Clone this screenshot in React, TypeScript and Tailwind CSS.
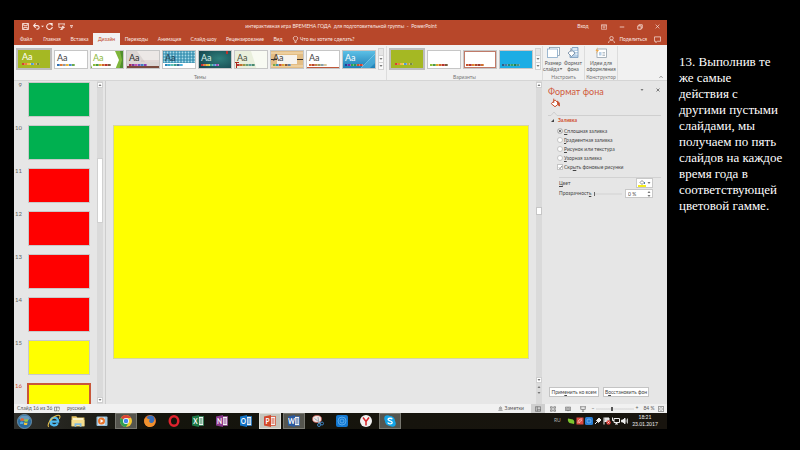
import { useState, type ReactNode } from "react";
import clsx from "clsx";

type Theme = {
  name: string;
  ink: string;
  dots: string[];
  art: ReactNode;
};

const WARM = ["#d8432e", "#e8862d", "#f0c63a", "#4f9bd0", "#c9a52e", "#7b8f3c"];
const MIXED = ["#2f6fb5", "#e07b35", "#8f9aa3", "#f0b93a", "#4a8fd0", "#6bab4a"];
const GREENISH = ["#8cbf3a", "#4c9a45", "#e0a52e", "#d1602e", "#b8342e", "#7a5a3a"];
const VIOLET = ["#a8275a", "#7a3a9a", "#c04fb0", "#6a58c0", "#3f7fc0", "#8a3fae"];
const AQUA = ["#2a86b8", "#39a8c9", "#5ac0b0", "#3f9a8a", "#2f6f9a", "#4fb0d8"];

const themes: Theme[] = [
  { name: "Галерея", ink: "text-white", dots: WARM, art: <rect width="34" height="19" fill="#a5b823" /> },
  { name: "Office", ink: "text-[#444444]", dots: MIXED, art: <rect width="34" height="19" fill="#fff" /> },
  {
    name: "Грань",
    ink: "text-[#8cb83c]",
    dots: GREENISH,
    art: (
      <>
        <rect width="34" height="19" fill="#fff" />
        <path d="M24 0H34V19H24L28 9Z" fill="#7fb63c" />
        <path d="M29 0H34V19H28L31 9Z" fill="#4f8f2e" />
        <path d="M0 14L2 19H0Z" fill="#7fb63c" />
      </>
    ),
  },
  {
    name: "Студия",
    ink: "text-[#2b2b2b]",
    dots: VIOLET,
    art: (
      <>
        <rect width="34" height="19" fill="#dcd6d4" />
        <path d="M10 0H34V11H18Z" fill="#ece8e6" />
        <path d="M14 10H32" stroke="#c7a9a4" strokeWidth="0.5" />
        <rect y="15" width="34" height="3" fill="#7a4a3c" />
      </>
    ),
  },
  {
    name: "Интеграл",
    ink: "text-[#1f3f50]",
    dots: AQUA,
    art: (
      <>
        <defs>
          <pattern id="lattice" width="3" height="3" patternUnits="userSpaceOnUse">
            <rect width="3" height="3" fill="#3f94b4" />
            <circle cx="1.5" cy="1.5" r="0.9" fill="#a9dcea" />
          </pattern>
        </defs>
        <rect width="34" height="19" fill="#fff" />
        <rect width="34" height="12" fill="url(#lattice)" />
      </>
    ),
  },
  {
    name: "Ион",
    ink: "text-[#d9efe9]",
    dots: ["#c8322e", "#e0862d", "#d8c83a", "#3fa88a", "#4a8fd0", "#9a4fb0"],
    art: (
      <>
        <defs>
          <radialGradient id="ion" cx="0.6" cy="0.4" r="0.8">
            <stop offset="0" stopColor="#2f7f7c" />
            <stop offset="1" stopColor="#123f48" />
          </radialGradient>
        </defs>
        <rect width="34" height="19" fill="url(#ion)" />
        <rect x="27" width="2" height="3" fill="#b8322e" />
      </>
    ),
  },
  {
    name: "Легкий дым",
    ink: "text-[#4a4f3c]",
    dots: ["#b8322e", "#c0702e", "#8f9a4a", "#6ba07a", "#5a9a9a", "#4a8a6a"],
    art: (
      <>
        <rect width="34" height="19" fill="#e9efdc" />
        <path d="M16 0H34V19H22Z" fill="#f8faf2" />
        <path d="M0 11H4V12H2V17H1V12H0Z" fill="#a8281e" />
      </>
    ),
  },
  {
    name: "Натуральные материалы",
    ink: "text-[#3c3c3c]",
    dots: ["#7fa83c", "#3f8fa8", "#c84f2e", "#e0a52e", "#8a5a3a", "#5a7f9a"],
    art: (
      <>
        <rect width="34" height="19" fill="#e3bd84" />
        <path d="M0 2H34M0 15H34" stroke="#edcf9f" strokeWidth="2" />
        <path d="M0 8.500H34" stroke="#3a2f28" strokeWidth="1.200" />
        <rect x="6" y="4" width="20" height="9" fill="#f6f3ee" />
      </>
    ),
  },
  {
    name: "Ретро",
    ink: "text-[#444444]",
    dots: ["#d8632e", "#b8442e", "#c08a4a", "#9a9a6a", "#8aa0a8", "#d8c8a0"],
    art: (
      <>
        <rect width="34" height="19" fill="#fff" />
        <rect y="16" width="34" height="1" fill="#c0583a" />
      </>
    ),
  },
  {
    name: "Сектор",
    ink: "text-white",
    dots: ["#1f3f9a", "#7a2f9a", "#2fa84a", "#2f8f5a", "#c84f3a", "#d8432e"],
    art: (
      <>
        <defs>
          <linearGradient id="sector" x2="0" y2="1">
            <stop offset="0" stopColor="#5cc0e6" />
            <stop offset="1" stopColor="#1878b0" />
          </linearGradient>
        </defs>
        <rect width="34" height="19" fill="url(#sector)" />
        <path d="M18 17L32 3V12L27 17Z" fill="#4fb0dc" opacity="0.7" />
        <path d="M18 17L32 3" stroke="#9fdcf4" strokeWidth="0.5" />
      </>
    ),
  },
];

const variants: Theme[] = [
  { name: "Вариант 1", ink: "", dots: WARM, art: <rect width="34" height="19" fill="#a5b823" /> },
  { name: "Вариант 2", ink: "", dots: GREENISH, art: <rect width="34" height="19" fill="#fff" /> },
  {
    name: "Вариант 3",
    ink: "",
    dots: ["#c8542e", "#b8342e", "#e0862d", "#b04a2e", "#a03c2e", "#d0702e"],
    art: <rect x="0.5" y="0.5" width="31" height="16" fill="#fff" stroke="#c07a68" />,
  },
  {
    name: "Вариант 4",
    ink: "",
    dots: ["#2a5f8a", "#3f7fa8", "#1f8a7a", "#2fa06a", "#1f7f5a", "#3f8f8a"],
    art: <rect width="34" height="19" fill="#1cade4" />,
  },
];

const tabs = [
  { label: "Файл", width: "w-6" },
  { label: "Главная", width: "w-7" },
  { label: "Вставка", width: "w-[27px]" },
  { label: "Дизайн", width: "w-[27px]" },
  { label: "Переходы", width: "w-[33px]" },
  { label: "Анимация", width: "w-[33px]" },
  { label: "Слайд-шоу", width: "w-[35px]" },
  { label: "Рецензирование", width: "w-12" },
  { label: "Вид", width: "w-[18px]" },
];

const slides = [
  { number: 9, color: "bg-[#00b050]" },
  { number: 10, color: "bg-[#00b050]" },
  { number: 11, color: "bg-[#ff0000]" },
  { number: 12, color: "bg-[#ff0000]" },
  { number: 13, color: "bg-[#ff0000]" },
  { number: 14, color: "bg-[#ff0000]" },
  { number: 15, color: "bg-[#ffff00]" },
  { number: 16, color: "bg-[#ffff00]" },
];

function Icon({ size = "size-2", children }: { size?: string; children: ReactNode }) {
  return (
    <svg viewBox="0 0 16 16" fill="none" stroke="currentColor" strokeWidth="1.6" className={clsx("shrink-0", size)} aria-hidden="true">
      {children}
    </svg>
  );
}

function Caret({ up = false }: { up?: boolean }) {
  return (
    <svg viewBox="0 0 4 4" className="size-1 shrink-0" fill="#777" aria-hidden="true">
      <path d={up ? "M0.500 3L2 1L3.500 3Z" : "M0.500 1H3.500L2 3Z"} />
    </svg>
  );
}

function ThemeTile({ theme, selected = false, sample = true }: { theme: Theme; selected?: boolean; sample?: boolean }) {
  return (
    <button
      type="button"
      aria-label={theme.name}
      aria-pressed={selected}
      className={clsx(
        "relative flex flex-col items-start justify-end overflow-hidden",
        selected ? "h-[22px] w-9 border-2 border-[#bdbdbd] pb-[3px] pl-1" : "h-[19px] w-[34px] border border-[#c6c6c6] pb-0.5 pl-0.5"
      )}
    >
      <svg viewBox="0 0 32 17" preserveAspectRatio="none" className="absolute inset-0 size-full" aria-hidden="true">
        {theme.art}
      </svg>
      {sample && <span className={clsx("relative text-[9px] leading-[9px]", theme.ink)}>Aa</span>}
      <span className={clsx("relative flex h-0.5", sample && "mt-0.5")}>
        {theme.dots.map((dot, index) => (
          <span key={index} className="h-0.5 w-[3px] border-r border-white/30" style={{ backgroundColor: dot }} />
        ))}
      </span>
    </button>
  );
}

function GalleryScroller() {
  return (
    <div className="flex h-[22px] w-1.5 flex-col border border-[#d2d2d2] bg-[#fafafa]">
      <button type="button" aria-label="Предыдущая строка" className="flex flex-1 items-center justify-center bg-[#e6e6e6]" />
      <button type="button" aria-label="Следующая строка" className="flex flex-1 items-center justify-center border-y border-[#d2d2d2]">
        <Caret />
      </button>
      <button type="button" aria-label="Дополнительно" className="flex flex-1 items-center justify-center">
        <Caret />
      </button>
    </div>
  );
}

function RibbonGroup({ label, className, children }: { label: string; className: string; children: ReactNode }) {
  return (
    <section className={clsx("flex flex-col justify-between border-r border-[#dcdcdc]", className)}>
      <div className="flex h-[26px] items-center">{children}</div>
      <h2 className="text-center text-[5px] leading-[6px] whitespace-nowrap text-[#777]">{label}</h2>
    </section>
  );
}

function RibbonCommand({ lines, caret = false, children }: { lines: [string, string]; caret?: boolean; children: ReactNode }) {
  return (
    <button type="button" className="flex w-5 flex-col items-center text-[5px] leading-[6px] whitespace-nowrap text-[#555]">
      {children}
      <span className="mt-0.5">{lines[0]}</span>
      <span className="flex items-center">
        {lines[1]}
        {caret && <Caret />}
      </span>
    </button>
  );
}

function TitleBar() {
  return (
    <header className="grid h-[13px] grid-cols-[1fr_auto_1fr] items-center pr-1.5 pl-[7px] text-[#fbe9e4]">
      <div className="flex items-center">
        <button type="button" aria-label="Сохранить" className="flex w-3 pl-px">
          <Icon size="size-[7px]">
            <path d="M1 1H15V15H1Z" strokeWidth="2" />
            <path d="M4 1V6H12V1M4 15V10H12V15" strokeWidth="2" />
          </Icon>
        </button>
        <button type="button" aria-label="Отменить" className="flex w-[13px]">
          <Icon size="size-[7px]">
            <path d="M2 6H10A4 4 0 0 1 10 14H8M6 1L1.500 6L6 11" strokeWidth="2.400" />
          </Icon>
          <svg viewBox="0 0 4 4" className="mt-0.5 ml-px size-[3px]" fill="currentColor" aria-hidden="true">
            <path d="M0 1H4L2 3Z" />
          </svg>
        </button>
        <button type="button" aria-label="Повторить" className="flex w-3">
          <Icon size="size-[7px]">
            <path d="M13 4A6.500 6.500 0 1 0 14.500 9M8 1H14V7" strokeWidth="2.400" />
          </Icon>
        </button>
        <button type="button" aria-label="Показ с начала" className="flex w-3">
          <Icon size="size-[7px]">
            <path d="M0 2H16M2 2V10H8M14 2V6M8 10V15M5 15H11" strokeWidth="1.800" />
            <path d="M10 7L15 10L10 13Z" fill="currentColor" />
          </Icon>
        </button>
        <button type="button" aria-label="Настройка панели" className="flex w-1">
          <svg viewBox="0 0 4 4" className="size-[3px]" fill="currentColor" aria-hidden="true">
            <path d="M0 0H4V1H0ZM0 2H4L2 4Z" />
          </svg>
        </button>
      </div>
      <h1 className="text-[5px] leading-none whitespace-pre">
        интерактивная игра ВРЕМЕНА ГОДА  для подготовительной группы  -  PowerPoint
      </h1>
      <div className="flex items-center justify-end">
        <button type="button" className="w-6 text-[5px] leading-none">
          Вход
        </button>
        <button type="button" aria-label="Параметры ленты" className="flex w-[18px] justify-center">
          <Icon size="size-1.5">
            <path d="M1 2H15V14H1ZM1 5H15M8 12V7M5 10L8 7L11 10" />
          </Icon>
        </button>
        <button type="button" aria-label="Свернуть" className="flex w-[18px] justify-center">
          <Icon size="size-1.5">
            <path d="M2 8H14" strokeWidth="2" />
          </Icon>
        </button>
        <button type="button" aria-label="Восстановить" className="flex w-[18px] justify-center">
          <Icon size="size-1.5">
            <path d="M2 5H11V14H2ZM5 5V2H14V11H11" strokeWidth="2" />
          </Icon>
        </button>
        <button type="button" aria-label="Закрыть" className="flex w-3 justify-end pr-px">
          <Icon size="size-[5px]">
            <path d="M2 2L14 14M14 2L2 14" strokeWidth="2" />
          </Icon>
        </button>
      </div>
    </header>
  );
}

function TabBar({ active, onSelect }: { active: string; onSelect: (label: string) => void }) {
  return (
    <nav className="flex h-3 items-stretch text-[5px] leading-none text-[#fbe9e4]">
      {tabs.map((tab) => (
        <button
          key={tab.label}
          type="button"
          onClick={() => onSelect(tab.label)}
          className={clsx(
            "shrink-0 whitespace-nowrap",
            tab.width,
            tab.label === active && "bg-[#f1f1f1] text-[#c0482a]"
          )}
        >
          {tab.label}
        </button>
      ))}
      <button type="button" className="ml-[5px] flex items-center gap-px whitespace-nowrap">
        <Icon size="size-[7px]">
          <path d="M6 12V10A5 5 0 1 1 10 10V12ZM6 15H10" />
        </Icon>
        Что вы хотите сделать?
      </button>
      <button type="button" className="ml-auto flex items-center gap-1">
        <Icon size="size-[7px]">
          <circle cx="8" cy="5" r="4" />
          <path d="M1 16C2 11 5 9.500 8 9.500S14 11 15 16" />
        </Icon>
        Поделиться
      </button>
      <button type="button" aria-label="Примечания" className="mr-1.5 ml-[7px] flex items-center">
        <Icon size="size-[7px]">
          <path d="M1 2H15V12H8L4 15V12H1Z" />
        </Icon>
      </button>
    </nav>
  );
}

function Ribbon() {
  return (
    <div className="flex h-9 items-stretch border-b border-[#d5d5d5] bg-[#f1f1f1] pt-px">
      <RibbonGroup label="Темы" className="w-[373px] shrink-0">
        <div className="flex items-center gap-0.5 pl-0.5">
          {themes.map((theme, index) => (
            <ThemeTile key={theme.name} theme={theme} selected={index === 0} />
          ))}
          <GalleryScroller />
        </div>
      </RibbonGroup>
      <RibbonGroup label="Варианты" className="w-[156px] shrink-0">
        <div className="flex items-center gap-0.5 pl-0.5">
          {variants.map((variant, index) => (
            <ThemeTile key={variant.name} theme={variant} selected={index === 0} sample={false} />
          ))}
          <GalleryScroller />
        </div>
      </RibbonGroup>
      <RibbonGroup label="Настроить" className="w-[42px] shrink-0">
        <RibbonCommand lines={["Размер", "слайда"]} caret>
          <svg viewBox="0 0 26 22" className="h-[11px] w-[13px]" aria-hidden="true">
            <rect x="5" y="1" width="20" height="16" fill="#fff" stroke="#7f95a8" strokeWidth="1.500" />
            <rect x="1" y="4" width="20" height="17" fill="#fff" stroke="#7fa3c4" strokeWidth="1.500" />
          </svg>
        </RibbonCommand>
        <RibbonCommand lines={["Формат", "фона"]}>
          <svg viewBox="0 0 24 22" className="h-[11px] w-3" aria-hidden="true">
            <path d="M10 1H22V21H6V12" fill="#b7cfe6" stroke="#6f94b8" strokeWidth="1.500" />
            <path d="M12 4H20M16 9H21M17 14H21" stroke="#fff" strokeWidth="2" />
            <path d="M2 12L9 6L16 12L9 19Z" fill="#fff" stroke="#667f99" strokeWidth="1.500" />
            <path d="M8 2V10" stroke="#667f99" strokeWidth="1.500" />
          </svg>
        </RibbonCommand>
      </RibbonGroup>
      <RibbonGroup label="Конструктор" className="w-[33px] shrink-0 items-center">
        <RibbonCommand lines={["Идеи для", "оформления"]}>
          <svg viewBox="0 0 24 22" className="h-[11px] w-3" aria-hidden="true">
            <rect x="4" y="4" width="19" height="17" fill="#fff" stroke="#8d9aa6" strokeWidth="1.500" />
            <path d="M8 10H13V17H8Z" fill="#b7cfe6" />
            <path d="M15 11H20M15 14H20M15 17H20" stroke="#8d9aa6" strokeWidth="1.200" />
            <path d="M6 0L4 6H8L2 14L4 8H1Z" fill="#f0a94a" />
          </svg>
        </RibbonCommand>
      </RibbonGroup>
      <button type="button" aria-label="Свернуть ленту" className="mt-auto mr-1 mb-px ml-auto text-[#666]">
        <Icon size="size-1">
          <path d="M2 11L8 5L14 11" strokeWidth="3" />
        </Icon>
      </button>
    </div>
  );
}

function SlideList({ current, onSelect }: { current: number; onSelect: (number: number) => void }) {
  return (
    <ol className="flex h-full w-20 flex-col gap-[9px] overflow-hidden pt-px">
      {slides.map((slide) => (
        <li key={slide.number} className="flex h-[34px] shrink-0 items-start">
          <button type="button" onClick={() => onSelect(slide.number)} className="flex items-start" aria-label={`Слайд ${slide.number}`}>
            <span
              className={clsx(
                "w-[13px] pr-[5px] text-right text-[6px] leading-[6px]",
                slide.number === current ? "text-[#d0502e]" : "text-[#666]"
              )}
            >
              {slide.number}
            </span>
            <span
              className={clsx(
                "h-[35px]",
                slide.color,
                slide.number === current ? "w-16 border-2 border-[#c8573a]" : "ml-px w-[62px] border border-[#c9c9c9]"
              )}
            />
          </button>
        </li>
      ))}
    </ol>
  );
}

function ArrowButton({ label, up = false }: { label: string; up?: boolean }) {
  return (
    <button type="button" aria-label={label} className="flex size-1.5 shrink-0 items-center justify-center border border-[#cfcfcf] bg-white">
      <Caret up={up} />
    </button>
  );
}

function FormatPane() {
  const [fill, setFill] = useState("Сплошная заливка");
  const [hidden, setHidden] = useState(true);
  const [opacity, setOpacity] = useState(0);
  const fills = ["Сплошная заливка", "Градиентная заливка", "Рисунок или текстура", "Узорная заливка"];

  return (
    <aside className="flex w-[125px] shrink-0 flex-col px-[6px] pt-[5px] pb-[7px] text-[5px] leading-none text-[#444]">
      <div className="flex items-center">
        <h2 className="flex-1 text-[9px] leading-3 whitespace-nowrap text-[#d0593a]">Формат фона</h2>
        <button type="button" aria-label="Параметры области задач" className="mb-1">
          <Caret />
        </button>
        <button type="button" aria-label="Закрыть область" className="mr-px mb-1 ml-3 text-[#555]">
          <Icon size="size-1">
            <path d="M2 2L14 14M14 2L2 14" strokeWidth="3" />
          </Icon>
        </button>
      </div>
      <button type="button" aria-label="Заливка" className="ml-0.5 w-fit text-[#c8502e]">
        <Icon size="size-2.5">
          <path d="M2 9L8 3L14 9L8 14Z" fill="#fff" />
          <path d="M6 1V8" />
          <path d="M12 5C15 7 15.500 9 15 13L12 9Z" fill="currentColor" />
        </Icon>
      </button>
      <svg viewBox="0 0 113 5" preserveAspectRatio="xMinYMid slice" className="mt-[3px] h-[5px] w-full" fill="none" stroke="#cfcfcf" aria-hidden="true">
        <path d="M0 4.500H3L6 1L9 4.500H113" />
      </svg>
      <button type="button" className="mt-0.5 flex items-center gap-1 pl-[3px] font-bold text-[#d0502e]">
        <svg viewBox="0 0 4 4" className="size-[3px]" fill="#444" aria-hidden="true">
          <path d="M4 0V4H0Z" />
        </svg>
        Заливка
      </button>
      <fieldset className="mt-[5px] flex flex-col gap-[3px] pl-[9px]">
        {fills.map((name) => (
          <label key={name} className="flex h-1.5 items-center gap-px whitespace-nowrap">
            <input
              type="radio"
              name="fill"
              checked={fill === name}
              onChange={() => setFill(name)}
              className="size-1.5 appearance-none rounded-full border border-[#c4c4c4] bg-white checked:bg-[#444] checked:shadow-[inset_0_0_0_1px_#fff]"
            />
            <span>
              <u>{name[0]}</u>
              {name.slice(1)}
            </span>
          </label>
        ))}
        <label className="flex h-1.5 items-center gap-px whitespace-nowrap">
          <span className="grid size-1.5 place-items-center">
            <input
              type="checkbox"
              checked={hidden}
              onChange={() => setHidden(!hidden)}
              className="col-start-1 row-start-1 size-1.5 appearance-none border border-[#c4c4c4] bg-white"
            />
            {hidden && (
              <svg viewBox="0 0 5 5" className="pointer-events-none col-start-1 row-start-1 size-[5px]" fill="none" stroke="#444" strokeWidth="0.600" aria-hidden="true">
                <path d="M1 2.500L2 3.700L4 1" />
              </svg>
            )}
          </span>
          <span>
            Скр<u>ы</u>ть фоновые рисунки
          </span>
        </label>
      </fieldset>
      <div className="mt-[7px] ml-[11px] flex items-center justify-between border-t border-[#d2d2d2] pr-2">
        <span>
          <u>Ц</u>вет
        </span>
        <button type="button" aria-label="Цвет" className="flex h-2.5 w-[17px] items-center justify-center gap-px border border-[#c8c8c8] bg-white">
          <svg viewBox="0 0 16 16" className="size-2" aria-hidden="true">
            <path d="M4 7L8 3L12 7L8 11Z" fill="#fff" stroke="#666" strokeWidth="1.500" />
            <path d="M13 6V10" stroke="#4a7fb0" strokeWidth="2" />
            <rect x="0" y="12" width="16" height="4" fill="#f5ec1e" />
          </svg>
          <Caret />
        </button>
      </div>
      <div className="mt-px ml-[11px] flex items-center pr-2">
        <label htmlFor="transparency" className="w-[35px] whitespace-nowrap">
          Прозрачност<u>ь</u>
        </label>
        <input
          id="transparency"
          type="range"
          min="0"
          max="100"
          value={opacity}
          onChange={(event) => setOpacity(Number(event.target.value))}
          className="h-1.5 w-7 appearance-none bg-linear-to-b from-transparent from-40% via-[#aaa] via-50% to-transparent to-60% [&::-webkit-slider-thumb]:h-1 [&::-webkit-slider-thumb]:w-px [&::-webkit-slider-thumb]:appearance-none [&::-webkit-slider-thumb]:bg-[#666]"
        />
        <div className="ml-auto flex h-[9px] w-7 items-center justify-between border border-[#c8c8c8] bg-white px-px">
          <input
            type="text"
            aria-label="Прозрачность, %"
            value={`${opacity} %`}
            onChange={(event) => setOpacity(parseInt(event.target.value, 10) || 0)}
            className="w-4 pl-px"
          />
          <span className="flex flex-col">
            <Caret up />
            <Caret />
          </span>
        </div>
      </div>
      <div className="mt-auto flex gap-1 pl-px">
        <button type="button" className="h-2.5 w-[50px] border border-[#c4c4c4] bg-white whitespace-nowrap">
          Прим<u>е</u>нить ко всем
        </button>
        <button type="button" className="h-2.5 w-[46px] border border-[#c4c4c4] bg-white whitespace-nowrap">
          В<u>о</u>сстановить фон
        </button>
      </div>
    </aside>
  );
}

function Workspace() {
  const [current, setCurrent] = useState(16);

  return (
    <main className="flex min-h-0 flex-1 basis-0 bg-[#e6e6e6]">
      <div className="flex w-[92px] shrink-0 justify-between border-r border-[#cdcdcd] pr-0.5">
        <SlideList current={current} onSelect={setCurrent} />
        <div className="flex w-1.5 flex-col bg-[#dadada] pt-px pb-px">
          <ArrowButton label="Прокрутить вверх" up />
          <div className="flex-[70]" />
          <div className="flex-[64] border border-[#d0d0d0] bg-white" />
          <div className="flex-[175]" />
          <ArrowButton label="Прокрутить вниз" />
        </div>
      </div>
      <div className="flex min-w-0 flex-1 items-center px-[7px] pb-0.5">
        <div className="aspect-video w-full border border-[#d6d6a0] bg-[#ffff00]" />
      </div>
      <div className="flex w-1.5 shrink-0 flex-col bg-[#dadada] pt-px pb-[9px]">
        <ArrowButton label="Предыдущая страница" up />
        <div className="flex-[120]" />
        <div className="h-2 border border-[#c6c6c6] bg-white" />
        <div className="flex-[163]" />
        <ArrowButton label="Следующая страница" />
        <button type="button" aria-label="Предыдущий слайд" className="mt-0.5 flex flex-col items-center">
          <Caret up />
        </button>
        <button type="button" aria-label="Следующий слайд" className="mt-0.5 flex flex-col items-center">
          <Caret />
        </button>
      </div>
      <FormatPane />
    </main>
  );
}

function StatusBar() {
  const [zoom, setZoom] = useState(84);

  return (
    <footer className="flex h-[9px] items-center bg-[#f1f1f1] text-[5px] leading-none whitespace-nowrap text-[#555]">
      <span className="w-10 pl-[3px]">Слайд 16 из 36</span>
      <button type="button" aria-label="Правописание" className="flex w-[13px]">
        <Icon size="size-1.5">
          <path d="M1 3H7V13H1ZM7 3H14V8M9 12L11 14L15 9" />
        </Icon>
      </button>
      <span>русский</span>
      <button type="button" className="mr-[7px] ml-auto flex items-center gap-0.5">
        <Icon size="size-[5px]">
          <path d="M1 14H15M3 10H13M8 2L12 7H4Z" />
        </Icon>
        Заметки
      </button>
      <button type="button" aria-label="Обычный" className="flex h-full w-[14px] items-center justify-center bg-[#cfcfcf]">
        <Icon size="size-1.5">
          <path d="M1 2H15V14H1ZM6 2V14M6 10H15" />
        </Icon>
      </button>
      <button type="button" aria-label="Сортировщик слайдов" className="flex w-[15px] justify-center">
        <Icon size="size-1.5">
          <path d="M1 2H6V6H1ZM10 2H15V6H10ZM1 10H6V14H1ZM10 10H15V14H10Z" />
        </Icon>
      </button>
      <button type="button" aria-label="Режим чтения" className="flex w-[15px] justify-center">
        <Icon size="size-1.5">
          <path d="M1 3H15V12H1ZM8 3V14M3 6H6M10 6H13M3 9H6M10 9H13" />
        </Icon>
      </button>
      <button type="button" aria-label="Показ слайдов" className="flex w-[15px] justify-center">
        <Icon size="size-1.5">
          <path d="M0 2H16M2 2V9H14V2M8 9V14M5 14H11" />
        </Icon>
      </button>
      <button type="button" aria-label="Уменьшить" className="w-1.5 text-center">
        −
      </button>
      <input
        type="range"
        aria-label="Масштаб"
        min="10"
        max="190"
        value={zoom}
        onChange={(event) => setZoom(Number(event.target.value))}
        className="h-1.5 w-[38px] appearance-none bg-linear-to-b from-transparent from-40% via-[#999] via-50% to-transparent to-60% [&::-webkit-slider-thumb]:h-1 [&::-webkit-slider-thumb]:w-0.5 [&::-webkit-slider-thumb]:appearance-none [&::-webkit-slider-thumb]:bg-[#555]"
      />
      <button type="button" aria-label="Увеличить" className="w-1.5 text-center">
        +
      </button>
      <span className="w-[18px] text-center">{zoom} %</span>
      <button type="button" aria-label="Вписать слайд" className="mr-[3px] flex">
        <Icon size="size-1.5">
          <path d="M1 1H15V15H1ZM8 3V6M8 10V13M3 8H6M10 8H13" />
        </Icon>
      </button>
    </footer>
  );
}

function OfficeIcon({ letter, color }: { letter: string; color: string }) {
  return (
    <svg viewBox="0 0 24 24" className="size-3" aria-hidden="true">
      <rect x="12" y="3" width="11" height="18" fill="#f4f4f4" stroke={color} strokeWidth="1.500" />
      <path d="M15 8H21M15 12H21M15 16H21" stroke={color} strokeWidth="2" />
      <path d="M0 3L14 0V24L0 21Z" fill={color} />
      <text x="7" y="17" fill="#fff" fontSize="13" fontWeight="700" textAnchor="middle">
        {letter}
      </text>
    </svg>
  );
}

const taskbarApps: { name: string; state?: "open" | "active"; icon: ReactNode }[] = [
  {
    name: "Internet Explorer",
    icon: (
      <svg viewBox="0 0 24 24" className="size-3.5" fill="none" aria-hidden="true">
        <path d="M6 13H19C19 4 6 4 6 13C6 21 16 21 18.500 16" stroke="#4fb9ee" strokeWidth="4" />
        <path d="M3 22C-1 18 8 5 17 2.500C23 1 23 5 21 8" stroke="#e8c04a" strokeWidth="1.800" />
      </svg>
    ),
  },
  {
    name: "Проводник",
    icon: (
      <svg viewBox="0 0 24 24" className="size-3.5" aria-hidden="true">
        <path d="M1 4H9L11 6H23V21H1Z" fill="#e6c565" />
        <path d="M3 7H21V12H3Z" fill="#fbf3cf" />
        <path d="M1 10H23V21H1Z" fill="#f4dd8d" />
        <path d="M6 22V16H18V22H15V19H9V22Z" fill="#7fb9df" />
      </svg>
    ),
  },
  {
    name: "Проигрыватель",
    icon: (
      <svg viewBox="0 0 24 24" className="size-3" aria-hidden="true">
        <rect x="1" y="3" width="22" height="19" rx="2" fill="#9cc3dc" />
        <rect x="4" y="5" width="14" height="15" fill="#d7e5ee" />
        <circle cx="11" cy="12" r="7" fill="#e8742a" />
        <path d="M9 8L15 12L9 16Z" fill="#fff" />
      </svg>
    ),
  },
  {
    name: "Chrome",
    state: "open",
    icon: (
      <svg viewBox="0 0 24 24" className="size-3" aria-hidden="true">
        <circle cx="12" cy="12" r="12" fill="#f4c82e" />
        <path d="M12 12L1.600 6A12 12 0 0 1 22.400 6H12Z" fill="#dc4437" />
        <path d="M1.600 6A12 12 0 0 0 12 24L17 15L12 12Z" fill="#2f9e55" />
        <circle cx="12" cy="12" r="6" fill="#fff" />
        <circle cx="12" cy="12" r="4.500" fill="#4385f0" />
      </svg>
    ),
  },
  {
    name: "Firefox",
    icon: (
      <svg viewBox="0 0 24 24" className="size-3" aria-hidden="true">
        <circle cx="12" cy="12" r="12" fill="#e8742a" />
        <circle cx="13" cy="9" r="8" fill="#3a6fb8" />
        <path d="M1 8C4 3 8 8 12 9C9 11 10 15 14 16C18 17 20 14 21 9C25 18 18 24 12 24C4 24 -1 17 1 8Z" fill="#f0922e" />
      </svg>
    ),
  },
  {
    name: "Opera",
    icon: (
      <svg viewBox="0 0 24 24" className="size-3" fill="none" aria-hidden="true">
        <ellipse cx="12" cy="12" rx="8.500" ry="9.500" stroke="#e0232e" strokeWidth="5" />
      </svg>
    ),
  },
  { name: "Excel", icon: <OfficeIcon letter="X" color="#1f7a48" /> },
  { name: "OneNote", icon: <OfficeIcon letter="N" color="#8a3a8c" /> },
  { name: "Outlook", icon: <OfficeIcon letter="O" color="#1272c4" /> },
  { name: "PowerPoint", state: "active", icon: <OfficeIcon letter="P" color="#d2472a" /> },
  { name: "Word", state: "open", icon: <OfficeIcon letter="W" color="#2b5aa0" /> },
  {
    name: "Ножницы",
    icon: (
      <svg viewBox="0 0 24 24" className="size-3" fill="none" aria-hidden="true">
        <ellipse cx="10" cy="8" rx="9" ry="7" fill="#f0e6e4" stroke="#c85a50" strokeWidth="1.500" />
        <path d="M5 7L18 17M12 4L14 18" stroke="#9aa8b4" strokeWidth="2" />
        <circle cx="20" cy="17" r="3" stroke="#3f83c0" strokeWidth="2" />
        <circle cx="14" cy="20" r="3" stroke="#3f83c0" strokeWidth="2" />
      </svg>
    ),
  },
  {
    name: "Настройки",
    icon: (
      <svg viewBox="0 0 24 24" className="size-3" fill="none" aria-hidden="true">
        <rect width="24" height="24" rx="4" fill="#1478d0" />
        <circle cx="12" cy="12" r="8" stroke="#6fb8f0" strokeWidth="1.500" />
        <circle cx="12" cy="12" r="4" stroke="#6fb8f0" strokeWidth="1.500" />
      </svg>
    ),
  },
  {
    name: "Яндекс",
    icon: (
      <svg viewBox="0 0 24 24" className="size-3" fill="none" aria-hidden="true">
        <circle cx="12" cy="12" r="12" fill="#f2f2f2" />
        <path d="M6 5L12 13L18 5M12 13V21" stroke="#d8242a" strokeWidth="3" />
      </svg>
    ),
  },
  {
    name: "Skype",
    state: "open",
    icon: (
      <svg viewBox="0 0 24 24" className="size-3" fill="none" aria-hidden="true">
        <circle cx="12" cy="12" r="10" fill="#12a5e8" />
        <circle cx="7" cy="7" r="6.500" fill="#12a5e8" />
        <circle cx="17" cy="17" r="6.500" fill="#12a5e8" />
        <path d="M16.500 8.500C15 5.500 8 6 8 9.200C8 12.500 16.500 11 16.500 15C16.500 18.500 8.500 18.500 7.500 15" stroke="#fff" strokeWidth="2.600" />
      </svg>
    ),
  },
];

function Tray() {
  return (
    <div className="ml-auto flex items-center text-[#eee]">
      <span className="w-[13px] pb-0.5 text-[5px] leading-none text-[#aaa]">RU</span>
      <div className="flex gap-px">
        <svg viewBox="0 0 16 16" className="size-2" aria-hidden="true">
          <path d="M2 3L12 5C15 7 15 11 14 14L5 12C2 10 1 6 2 3Z" fill="#7cc42e" />
        </svg>
        <svg viewBox="0 0 16 16" className="size-2" aria-hidden="true">
          <rect x="1" y="1" width="14" height="14" fill="#dc4a40" />
          <path d="M4 12C4 6 7 4 12 4M7 12C7 9 9 7 12 7" stroke="#f8d0cc" strokeWidth="1.500" fill="none" />
        </svg>
        <svg viewBox="0 0 16 16" className="size-2" aria-hidden="true">
          <rect width="16" height="16" rx="3" fill="#2a7fd4" />
          <circle cx="8" cy="8" r="4" stroke="#7fbaf0" strokeWidth="1.500" fill="none" />
        </svg>
        <Icon>
          <path d="M2 14L6 10M5 7L9 11L14 6L10 2Z" fill="currentColor" strokeWidth="2" />
        </Icon>
        <svg viewBox="0 0 16 16" className="size-2" aria-hidden="true">
          <path d="M2 1V15M3 2H12V9H3" stroke="#eee" strokeWidth="2" fill="#ddd" />
          <circle cx="11" cy="11" r="4.500" fill="#d8352e" />
          <path d="M9 9L13 13M13 9L9 13" stroke="#fff" strokeWidth="1.200" />
        </svg>
        <Icon>
          <path d="M4 3H15V11H4ZM1 1V7H4M9 11V14M6 14H12" strokeWidth="2" />
        </Icon>
        <Icon>
          <path d="M1 6H4L8 2V14L4 10H1Z" fill="currentColor" />
          <path d="M10 5V11M13 3V13" />
        </Icon>
      </div>
      <time className="mr-1.5 flex w-8 flex-col items-center text-[5px] leading-[7px]">
        <span>18:21</span>
        <span>23.01.2017</span>
      </time>
    </div>
  );
}

function Taskbar() {
  return (
    <nav className="flex h-4 items-stretch bg-linear-to-r from-[#30302c] via-[#14140c] via-20% to-[#18140e]">
      <button type="button" aria-label="Пуск" className="flex w-[29px] items-center pl-[3px]">
        <svg viewBox="0 0 32 32" className="size-[15px]" aria-hidden="true">
          <circle cx="16" cy="16" r="15" fill="#2b6a9c" stroke="#7faac4" strokeWidth="1.500" />
          <ellipse cx="16" cy="9" rx="11" ry="6" fill="#8fbbd6" opacity="0.600" />
          <path d="M8 10C11 8 13 9 15 10L14 15C12 14 10 14 7 15Z" fill="#e8622e" />
          <path d="M16.500 10.500C19 12 21 12 24 10.500L23 16C20 17 18 17 15.500 15.500Z" fill="#9ccb3a" />
          <path d="M7 17C10 15.500 12 16 14 17L13 22C11 21 9 21 6 22Z" fill="#4fa8e0" />
          <path d="M15.500 17.500C18 19 20 19 22.500 18L21.500 23C19 24 17 24 14.500 22.500Z" fill="#f4c83a" />
        </svg>
      </button>
      {taskbarApps.map((app) => (
        <button
          key={app.name}
          type="button"
          aria-label={app.name}
          className={clsx(
            "mr-0.5 flex w-[22px] items-center justify-center",
            app.state === "open" && "border border-[#77776f] bg-[#55554e]",
            app.state === "active" && "border border-[#dcdcd6] bg-[#c4c4bc]"
          )}
        >
          {app.icon}
        </button>
      ))}
      <Tray />
    </nav>
  );
}

export default function App() {
  const [tab, setTab] = useState("Дизайн");

  return (
    <div className="flex min-h-screen bg-black font-['Lato','Noto_Sans',sans-serif]">
      <div className="flex min-w-0 flex-1 flex-col pt-5 pb-[21px] pl-3.5">
        <div className="bg-[#b7472a]">
          <TitleBar />
          <TabBar active={tab} onSelect={setTab} />
        </div>
        <Ribbon />
        <Workspace />
        <StatusBar />
        <Taskbar />
      </div>
      <p className="w-[133px] shrink-0 pt-[54px] pl-3 font-['Liberation_Serif',serif] text-[13px] leading-4 whitespace-nowrap text-white">
        13. Выполнив те
        <br />
        же самые
        <br />
        действия с
        <br />
        другими пустыми
        <br />
        слайдами, мы
        <br />
        получаем по пять
        <br />
        слайдов на каждое
        <br />
        время года в
        <br />
        соответствующей
        <br />
        цветовой гамме.
      </p>
    </div>
  );
}
